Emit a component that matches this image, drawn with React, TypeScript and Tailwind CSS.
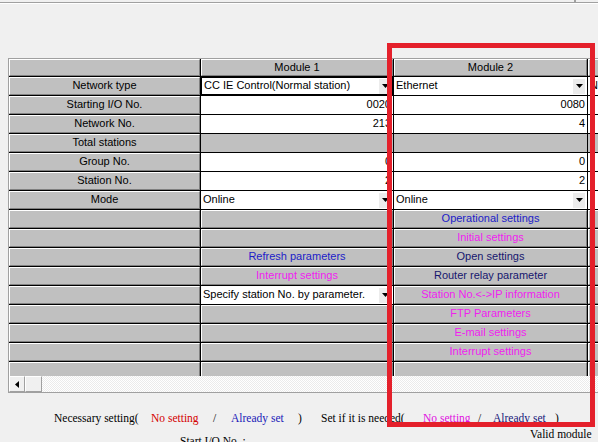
import React from 'react';

type Cell =
  | { k: 'btn'; text?: string; c?: string }
  | { k: 'val'; text?: string }
  | { k: 'combo'; text: string; focus?: boolean }
  | { k: 'flat' };

const BLUE = 'text-[#1c1cc8]';
const NAVY = 'text-[#16166e]';
const MAG = 'text-[#f020f0]';

const btn = (text?: string, c = 'text-black'): Cell => ({ k: 'btn', text, c });
const val = (text?: string): Cell => ({ k: 'val', text });
const combo = (text: string, focus = false): Cell => ({ k: 'combo', text, focus });
const flat: Cell = { k: 'flat' };

const header: Cell[] = [btn(''), btn('Module 1'), btn('Module 2'), btn('Module 3')];

const rows: Cell[][] = [
  [btn('Network type'), combo('CC IE Control(Normal station)', true), combo('Ethernet'), combo('None')],
  [btn('Starting I/O No.'), val('0020'), val('0080'), val()],
  [btn('Network No.'), val('213'), val('4'), val()],
  [btn('Total stations'), flat, flat, flat],
  [btn('Group No.'), val('0'), val('0'), val()],
  [btn('Station No.'), val('2'), val('2'), val()],
  [btn('Mode'), combo('Online'), combo('Online'), val()],
  [btn(), btn(), btn('Operational settings', BLUE), btn()],
  [btn(), btn(), btn('Initial settings', MAG), btn()],
  [btn(), btn('Refresh parameters', BLUE), btn('Open settings', NAVY), btn()],
  [btn(), btn('Interrupt settings', MAG), btn('Router relay parameter', NAVY), btn()],
  [btn(), combo('Specify station No. by parameter.'), btn('Station No.<->IP information', MAG), btn()],
  [btn(), btn(), btn('FTP Parameters', MAG), btn()],
  [btn(), btn(), btn('E-mail settings', MAG), btn()],
  [btn(), btn(), btn('Interrupt settings', MAG), btn()],
  [btn(), btn(), btn(), btn()],
];

function Arrow() {
  return (
    <div className="flex h-[15px] w-[12px] shrink-0 items-center justify-center bg-[#ececec]">
      <svg width="7" height="4" viewBox="0 0 7 4">
        <polygon points="0,0 7,0 3.5,4" fill="#000" />
      </svg>
    </div>
  );
}

function CellView({ cell }: { cell: Cell }) {
  if (cell.k === 'btn') {
    return (
      <div
        className={`flex h-full w-full items-center justify-center whitespace-nowrap border-t border-l border-r border-b border-t-white border-l-white border-r-[#808080] border-b-[#808080] bg-[#c0c0c0] pb-px ${cell.c ?? ''}`}
      >
        {cell.text}
      </div>
    );
  }
  if (cell.k === 'val') {
    return (
      <div className="flex h-full w-full items-center justify-end whitespace-nowrap bg-white pr-[2px] pb-px">
        {cell.text}
      </div>
    );
  }
  if (cell.k === 'flat') {
    return <div className="h-full w-full bg-[#c0c0c0]" />;
  }
  return (
    <div
      className={`flex h-full w-full items-center justify-between whitespace-nowrap bg-white pr-[2px] ${
        cell.focus ? 'pl-[3px] shadow-[inset_0_0_0_1px_#000]' : 'pl-[2px]'
      }`}
    >
      <span className="pb-px">{cell.text}</span>
      <Arrow />
    </div>
  );
}

function Row({ cells, h }: { cells: Cell[]; h: string }) {
  return (
    <>
      {cells.map((c, i) => (
        <div key={i} className={`${h} overflow-hidden border-r border-b border-black`}>
          <CellView cell={c} />
        </div>
      ))}
    </>
  );
}

export default function App() {
  return (
    <div className="relative h-[442px] w-[598px] overflow-hidden bg-[#f0f0f0] font-['Liberation_Sans',Arial,sans-serif] text-[11px] text-black">
      {/* top edge */}
      <div className="h-[58px]">
        <div className="flex h-[2px]">
          <div className="ml-[574px] w-[2px] bg-[#a0a0a0]" />
        </div>
        <div className="h-px bg-[#a0a0a0]" />
        <div className="h-px bg-white" />
      </div>

      {/* grid */}
      <div className="ml-[8px] w-[590px] overflow-hidden border-t border-b border-l border-[#a0a0a0]">
        <div className="h-[317px] overflow-hidden">
          <div className="grid w-[779px] grid-cols-[192px_193px_194px_200px]">
            <Row cells={header} h="h-[18px]" />
            {rows.map((r, i) => (
              <Row key={i} cells={r} h="h-[19px]" />
            ))}
          </div>
        </div>
        {/* horizontal scrollbar */}
        <div className="flex h-[16px]">
          <div className="flex h-full w-[16px] items-center justify-center border border-t-white border-l-white border-r-[#a0a0a0] border-b-[#a0a0a0] bg-[#f0f0f0]">
            <svg width="4" height="7" viewBox="0 0 4 7">
              <polygon points="4,0 4,7 0,3.5" fill="#000" />
            </svg>
          </div>
          <div className="h-full w-[17px] border border-t-white border-l-white border-r-[#a0a0a0] border-b-[#a0a0a0] bg-[#f0f0f0]" />
          <div className="h-full flex-1 bg-[repeating-conic-gradient(#ffffff_0%_25%,#ebebeb_0%_50%)] bg-[length:2px_2px]" />
        </div>
      </div>

      {/* legend */}
      <div className="mt-[18px] flex h-[14px] items-center whitespace-nowrap pl-[54px] font-['Liberation_Serif','Times_New_Roman',serif] text-[11.5px] leading-[14px]">
        <span className="w-[97px]">Necessary setting(</span>
        <span className="w-[62px] text-[#d40000]">No setting</span>
        <span className="w-[18px]">/</span>
        <span className="w-[67px] text-[#1a1ab8]">Already set</span>
        <span className="w-[23px]">)</span>
        <span className="w-[102px]">Set if it is needed(</span>
        <span className="w-[55px] text-[#e010e0]">No setting</span>
        <span className="w-[15px]">/</span>
        <span className="w-[62px] text-[#18187a]">Already set</span>
        <span>)</span>
      </div>
      <div className="flex items-start whitespace-nowrap font-['Liberation_Serif','Times_New_Roman',serif] text-[11.5px] leading-[14px]">
        <div className="w-[530px] pl-[180px] pt-[9px]">Start I/O No. :</div>
        <div className="pt-[2px]">
          <div>Valid module</div>
          <div>during other</div>
        </div>
      </div>

      {/* red annotation frame */}
      <div className="pointer-events-none absolute left-[387px] top-[43px] h-[384px] w-[208px] border-[5px] border-[#e4202b]" />
    </div>
  );
}
